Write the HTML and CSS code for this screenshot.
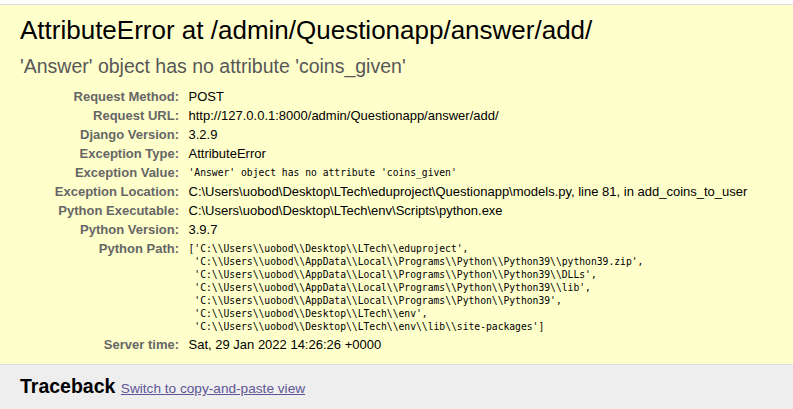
FILE: index.html
```html
<!DOCTYPE html>
<html>
<head>
<meta charset="utf-8">
<title>AttributeError at /admin/Questionapp/answer/add/</title>
<link rel="stylesheet" href="styles.css">
</head>
<body>
<div class="topstrip"></div>
<div id="summary">
  <h1>AttributeError at /admin/Questionapp/answer/add/</h1>
  <pre class="exception_value">'Answer' object has no attribute 'coins_given'</pre>
  <table class="meta">
    <tbody>
      <tr><th>Request Method:</th><td>POST</td></tr>
      <tr><th>Request URL:</th><td>http://127.0.0.1:8000/admin/Questionapp/answer/add/</td></tr>
      <tr><th>Django Version:</th><td>3.2.9</td></tr>
      <tr><th>Exception Type:</th><td>AttributeError</td></tr>
      <tr><th>Exception Value:</th><td><pre class="code">'Answer' object has no attribute 'coins_given'</pre></td></tr>
      <tr><th>Exception Location:</th><td>C:\Users\uobod\Desktop\LTech\eduproject\Questionapp\models.py, line 81, in add_coins_to_user</td></tr>
      <tr><th>Python Executable:</th><td>C:\Users\uobod\Desktop\LTech\env\Scripts\python.exe</td></tr>
      <tr><th>Python Version:</th><td>3.9.7</td></tr>
      <tr><th>Python Path:</th><td><pre class="code">['C:\\Users\\uobod\\Desktop\\LTech\\eduproject',
 'C:\\Users\\uobod\\AppData\\Local\\Programs\\Python\\Python39\\python39.zip',
 'C:\\Users\\uobod\\AppData\\Local\\Programs\\Python\\Python39\\DLLs',
 'C:\\Users\\uobod\\AppData\\Local\\Programs\\Python\\Python39\\lib',
 'C:\\Users\\uobod\\AppData\\Local\\Programs\\Python\\Python39',
 'C:\\Users\\uobod\\Desktop\\LTech\\env',
 'C:\\Users\\uobod\\Desktop\\LTech\\env\\lib\\site-packages']</pre></td></tr>
      <tr><th>Server time:</th><td>Sat, 29 Jan 2022 14:26:26 +0000</td></tr>
    </tbody>
  </table>
</div>
<div id="traceback">
  <h2>Traceback <span class="commands"><a href="#">Switch to copy-and-paste view</a></span></h2>
</div>
</body>
</html>
```

FILE: styles.css
```css
html, body, div, h1, h2, pre, table, th, td { margin: 0; padding: 0; }
body {
  font-family: "Liberation Sans", Arial, sans-serif;
  font-size: 13px;
  background: #fff;
  color: #000;
  overflow: hidden;
}
.topstrip {
  height: 4px;
  border-bottom: 1px solid #ddd;
}
#summary {
  background: #ffc;
  padding: 10px 20px;
  border-bottom: 1px solid #ddd;
}
h1 {
  font-weight: normal;
  font-size: 26px;
  line-height: 30px;
}
pre.exception_value {
  font-family: "Liberation Sans", Arial, sans-serif;
  color: #575757;
  font-size: 19.5px;
  line-height: 22px;
  margin: 10px 0;
  white-space: pre-wrap;
}
table.meta {
  border: none;
  border-collapse: collapse;
  width: 100%;
  background: transparent;
}
table.meta th, table.meta td {
  vertical-align: top;
  padding: 2px 3px;
  line-height: 15px;
}
table.meta th {
  width: 156px;
  text-align: right;
  color: #666;
  font-weight: bold;
  padding-right: 6.5px;
}
pre.code {
  font-family: "DejaVu Sans Mono", "Liberation Mono", monospace;
  font-size: 9.7px;
  line-height: 13px;
  white-space: pre-wrap;
  padding-top: 1px;
}
#traceback {
  background: #eee;
  padding: 10px 20px;
  height: 24px;
}
h2 {
  font-size: 19.5px;
  font-weight: bold;
  line-height: 22px;
}
span.commands {
  font-size: 13.65px;
  font-weight: normal;
}
span.commands a {
  color: #5e5694;
}
```
